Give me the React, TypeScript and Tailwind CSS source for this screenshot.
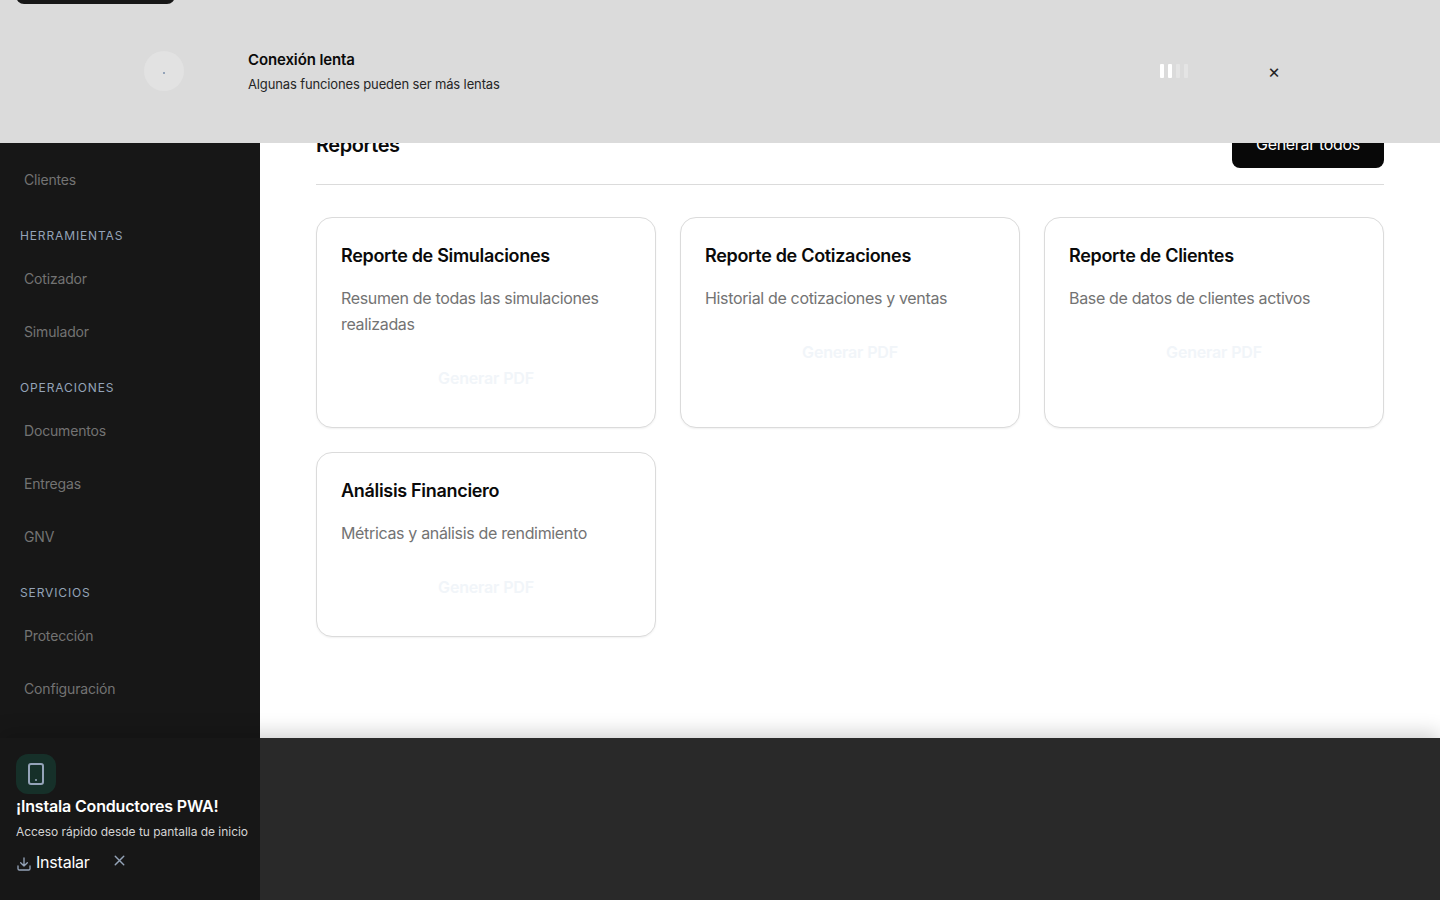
import React from "react";

const groups = [
  { title: "", items: ["Clientes"] },
  { title: "HERRAMIENTAS", items: ["Cotizador", "Simulador"] },
  { title: "OPERACIONES", items: ["Documentos", "Entregas", "GNV"] },
  { title: "SERVICIOS", items: ["Protección", "Configuración"] },
];

const reports = [
  { title: "Reporte de Simulaciones", text: "Resumen de todas las simulaciones realizadas" },
  { title: "Reporte de Cotizaciones", text: "Historial de cotizaciones y ventas" },
  { title: "Reporte de Clientes", text: "Base de datos de clientes activos" },
  { title: "Análisis Financiero", text: "Métricas y análisis de rendimiento" },
];

function Sidebar() {
  return (
    <aside className="h-[900px] w-[260px] shrink-0 bg-[#171717] pt-[153px]">
      {groups.map((group) => (
        <div key={group.title} className="mb-[3px]">
          {group.title && (
            <div className="flex h-[43px] items-center px-5 pt-[11px] text-xs tracking-[0.87px] text-[#94a3b8]">
              {group.title}
            </div>
          )}
          {group.items.map((item) => (
            <div key={item} className="flex h-[53px] items-center px-6 text-sm tracking-[-0.17px] text-[#737373]">
              {item}
            </div>
          ))}
        </div>
      ))}
    </aside>
  );
}

function ConnectionBanner() {
  return (
    <div className="absolute inset-x-0 top-0 z-20 h-[143px] bg-[#dbdbdb]">
      <div className="absolute left-4 -top-9 h-10 w-[159px] rounded-lg bg-[#171717]" />
      <div className="flex h-full items-start px-36">
        <div className="mt-[51px] flex size-10 items-center justify-center rounded-full bg-[#e2e2e2] pt-1">
          <span className="size-0.5 bg-[#94a3b8]" />
        </div>
        <div className="ml-16 mt-[48px] grow">
          <div className="text-[15px] font-semibold leading-6 tracking-[-0.12px] text-[#0a0a0a]">Conexión lenta</div>
          <div className="mt-0.5 text-[13px] leading-[21px] tracking-[-0.13px] text-[#262626]">Algunas funciones pueden ser más lentas</div>
        </div>
        <div className="mt-16 flex gap-1">
          <span className="h-3.5 w-1 rounded-[1px] bg-white" />
          <span className="h-3.5 w-1 rounded-[1px] bg-white" />
          <span className="h-3.5 w-1 rounded-[1px] bg-[#e4e4e4]" />
          <span className="h-3.5 w-1 rounded-[1px] bg-[#e4e4e4]" />
        </div>
        <div className="ml-[76px] mt-[61px] flex w-[32px] justify-start pl-[2px]">
          <span className="w-4 text-center text-[19px] leading-[21px] text-[#262626]">×</span>
        </div>
      </div>
    </div>
  );
}

function InstallBar() {
  return (
    <div className="absolute inset-x-0 bottom-0 z-10 h-[162px] bg-[#292929] shadow-[0_-4px_20px_rgba(0,0,0,0.2)]">
      <div className="h-full w-[260px] bg-[#171717] px-4 pt-4">
        <div className="flex size-10 items-center justify-center rounded-xl bg-[#163029]">
          <svg width="24" height="24" viewBox="0 0 24 24" fill="none" stroke="#94a3b8" strokeWidth="2" strokeLinecap="round" strokeLinejoin="round">
            <rect x="5" y="2" width="14" height="20" rx="2" />
            <path d="M12 18h.01" />
          </svg>
        </div>
        <div className="whitespace-nowrap text-base font-semibold leading-6 tracking-[-0.17px] text-white">¡Instala Conductores PWA!</div>
        <div className="mt-1 whitespace-nowrap text-xs leading-5 tracking-[-0.04px] text-[#d4d4d4]">Acceso rápido desde tu pantalla de inicio</div>
        <div className="mt-1.5 flex h-7 items-center">
          <svg className="mt-1" width="16" height="16" viewBox="0 0 24 24" fill="none" stroke="#94a3b8" strokeWidth="2" strokeLinecap="round" strokeLinejoin="round">
            <path d="M21 15v4a2 2 0 0 1-2 2H5a2 2 0 0 1-2-2v-4M7 10l5 5 5-5M12 15V3" />
          </svg>
          <span className="ml-1 text-base tracking-[-0.22px] text-white">Instalar</span>
          <svg className="-mt-1 ml-[21px]" width="17" height="17" viewBox="0 0 24 24" fill="none" stroke="#94a3b8" strokeWidth="2" strokeLinecap="round" strokeLinejoin="round">
            <path d="M18 6 6 18M6 6l12 12" />
          </svg>
        </div>
      </div>
    </div>
  );
}

export default function App() {
  return (
    <div className="relative flex h-[900px] w-full overflow-hidden bg-white font-['Inter',sans-serif]">
      <Sidebar />
      <main className="grow px-14 pt-[120px]">
        <header className="flex h-[65px] items-start justify-between border-b border-[#dbdbdb]">
          <h1 className="mt-[10px] text-xl font-semibold leading-[30px] tracking-[-0.45px] text-[#0a0a0a]">Reportes</h1>
          <button className="h-12 w-[152px] rounded-lg bg-[#080808] text-base tracking-[-0.32px] text-white">Generar todos</button>
        </header>
        <section className="mt-8 grid grid-cols-3 gap-6">
          {reports.map((report) => (
            <article key={report.title} className="rounded-2xl border border-[#dbdbdb] bg-white p-6 shadow-[0_1px_2px_rgba(0,0,0,0.06)]">
              <h2 className="text-lg font-semibold leading-7 tracking-[-0.31px] text-[#0a0a0a]">{report.title}</h2>
              <p className="mt-[15px] text-base leading-[26px] tracking-[-0.34px] text-[#737373]">{report.text}</p>
              <button className="mt-4 h-[50px] w-full text-base font-semibold tracking-[-0.18px] text-[#f1f5f9]">Generar PDF</button>
            </article>
          ))}
        </section>
      </main>
      <ConnectionBanner />
      <InstallBar />
    </div>
  );
}
